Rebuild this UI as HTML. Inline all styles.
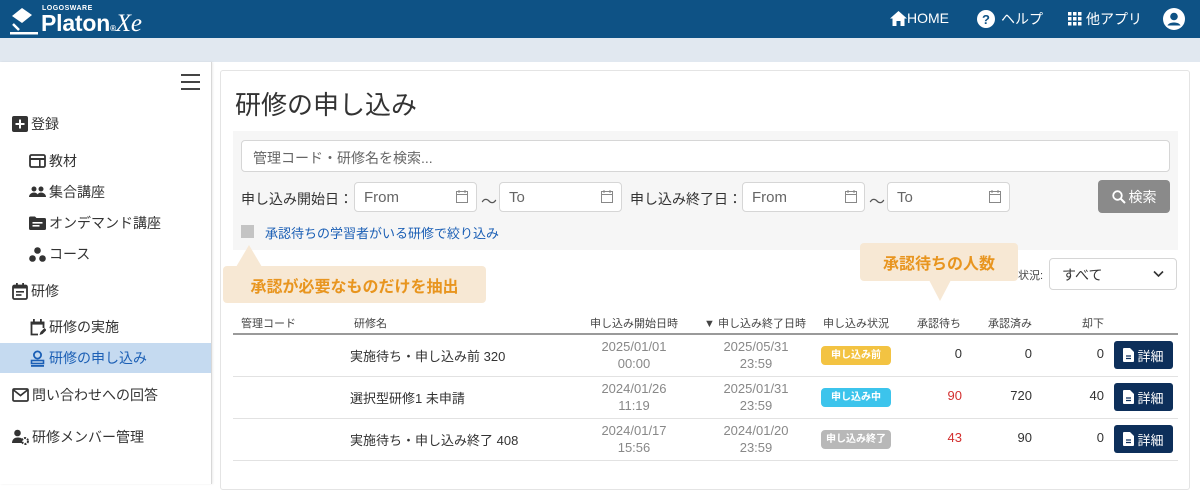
<!DOCTYPE html>
<html><head><meta charset="utf-8"><style>
*{box-sizing:border-box;margin:0;padding:0}
body{width:1200px;height:484px;overflow:hidden;background:#fff;font-family:"Liberation Sans","Noto Sans CJK JP",sans-serif;color:#333;position:relative}
.a{position:absolute}
.hdr{left:0;top:0;width:1200px;height:38px;background:#0e5285}
.band{left:0;top:38px;width:1200px;height:24px;background:#e1e8f0}
.side{left:0;top:62px;width:212px;height:422px;border-right:1px solid #d8d8d8;box-shadow:1px 0 2px rgba(0,0,0,.08);background:#fff}
.nav{font-size:14px;color:#333;white-space:nowrap;display:flex;align-items:center;gap:3px}
.nav svg{flex:none}
.card{left:220px;top:70px;width:970px;height:420px;border:1px solid #e4e4e4;border-radius:3px;background:#fff}
.inp{background:#fff;border:1px solid #d6d6d6;border-radius:4px}
.lbl{font-size:14px;color:#333}
.ph{font-size:14px;color:#666}
.th{font-size:11px;color:#444;top:315px;white-space:nowrap}
.td{font-size:13px;color:#333;white-space:nowrap}
.dt{font-size:13px;color:#888;text-align:center;line-height:17px;width:100px}
.badge{width:70px;height:19px;border-radius:4px;color:#fff;font-size:10px;font-weight:bold;text-align:center;line-height:19px}
.btn{width:59px;height:28px;background:#0d2f5a;border-radius:3px;color:#fff;font-size:13px;display:flex;align-items:center;justify-content:center;gap:3px}
.num{font-size:13px;text-align:right;width:50px}
.line{left:233px;width:945px;height:1px;background:#e2e2e2}
.call{background:#f7e8d4;color:#e8951f;font-weight:bold;font-size:16px;border-radius:4px;display:flex;align-items:center;justify-content:center}
</style></head><body>
<div class="a hdr"></div>
<!-- logo -->
<svg class="a" style="left:8px;top:5px" width="30" height="30" viewBox="0 0 30 30"><path d="M4 11 L14 3 L24 10 L14 18 Z" fill="#fff"/><path d="M5 19 L11 25" stroke="#fff" stroke-width="2.5"/><rect x="2" y="27" width="32" height="2.5" fill="#fff"/></svg>
<div class="a" style="left:42px;top:5px;font-size:7px;color:#fff;font-weight:bold;letter-spacing:.5px">LOGOSWARE</div>
<div class="a" style="left:41px;top:10px;font-size:23px;color:#fff;font-weight:bold;letter-spacing:-.2px;line-height:26px">Platon<span style="font-size:8px">®</span><span style="font-family:'Liberation Serif',serif;font-style:italic;font-weight:normal;font-size:25px">Xe</span></div>
<!-- top nav -->
<svg class="a" style="left:890px;top:11px" width="17" height="15" viewBox="0 0 17 15"><path d="M8.5 0 L17 7.5 H14.5 V15 H10.5 V10 H6.5 V15 H2.5 V7.5 H0 Z" fill="#fff"/></svg>
<div class="a" style="left:907px;top:10px;font-size:14px;color:#fff">HOME</div>
<svg class="a" style="left:977px;top:10px" width="18" height="18" viewBox="0 0 18 18"><circle cx="9" cy="9" r="9" fill="#fff"/><text x="9" y="14" font-size="13" font-weight="bold" text-anchor="middle" fill="#0e5285" font-family="Liberation Sans">?</text></svg>
<div class="a" style="left:1001px;top:9px;font-size:14px;color:#fff">ヘルプ</div>
<svg class="a" style="left:1068px;top:12px" width="14" height="14" viewBox="0 0 14 14" fill="#fff"><rect x="0" y="0" width="3.5" height="3.5"/><rect x="5" y="0" width="3.5" height="3.5"/><rect x="10" y="0" width="3.5" height="3.5"/><rect x="0" y="5" width="3.5" height="3.5"/><rect x="5" y="5" width="3.5" height="3.5"/><rect x="10" y="5" width="3.5" height="3.5"/><rect x="0" y="10" width="3.5" height="3.5"/><rect x="5" y="10" width="3.5" height="3.5"/><rect x="10" y="10" width="3.5" height="3.5"/></svg>
<div class="a" style="left:1086px;top:9px;font-size:14px;color:#fff">他アプリ</div>
<svg class="a" style="left:1163px;top:8px" width="22" height="22" viewBox="0 0 22 22"><circle cx="11" cy="11" r="11" fill="#fff"/><circle cx="11" cy="8.5" r="3.8" fill="#0e5285"/><path d="M4.5 17.5 C6 13.5 16 13.5 17.5 17.5 Z" fill="#0e5285"/></svg>
<div class="a band"></div>
<div class="a side"></div>
<!-- hamburger -->
<div class="a" style="left:181px;top:74px;width:19px;height:2px;background:#444"></div>
<div class="a" style="left:181px;top:81px;width:19px;height:2px;background:#444"></div>
<div class="a" style="left:181px;top:88px;width:19px;height:2px;background:#444"></div>
<!-- sidebar items -->
<div class="a nav" style="left:12px;top:114px"><svg width="16" height="16" viewBox="0 0 16 16"><rect width="16" height="16" rx="2" fill="#333"/><path d="M8 3.5v9M3.5 8h9" stroke="#fff" stroke-width="2"/></svg>登録</div>
<div class="a nav" style="left:29px;top:151px"><svg width="17" height="14" viewBox="0 0 17 14"><rect x="1" y="1" width="15" height="12" rx="1.5" fill="none" stroke="#333" stroke-width="1.8"/><rect x="1" y="4" width="15" height="2" fill="#333"/><rect x="10" y="6" width="1.6" height="7" fill="#333"/></svg>教材</div>
<div class="a nav" style="left:29px;top:182px"><svg width="17" height="14" viewBox="0 0 17 14" fill="#333"><circle cx="5" cy="4" r="2.5"/><circle cx="12" cy="4" r="2.5"/><path d="M0 12c0-3 3-4.5 5-4.5s4.5 1.5 4.5 4.5z"/><path d="M8 12c0-3 2-4.5 4-4.5s5 1.5 5 4.5z"/></svg>集合講座</div>
<div class="a nav" style="left:29px;top:213px"><svg width="17" height="14" viewBox="0 0 17 14"><path d="M0 2a1.5 1.5 0 0 1 1.5-1.5H6l1.5 1.5H15.5A1.5 1.5 0 0 1 17 3.5V12.5A1.5 1.5 0 0 1 15.5 14H1.5A1.5 1.5 0 0 1 0 12.5z" fill="#333"/><rect x="3.5" y="6" width="10" height="1.6" fill="#fff"/><rect x="3.5" y="9" width="7" height="1.6" fill="#fff"/></svg>オンデマンド講座</div>
<div class="a nav" style="left:29px;top:244px"><svg width="17" height="15" viewBox="0 0 17 15" fill="#333"><circle cx="8.5" cy="3.5" r="3.3"/><circle cx="3.5" cy="11.5" r="3.3"/><circle cx="13.5" cy="11.5" r="3.3"/></svg>コース</div>
<div class="a nav" style="left:12px;top:281px"><svg width="16" height="17" viewBox="0 0 16 17"><rect x="1" y="2.5" width="14" height="13.5" rx="1.5" fill="none" stroke="#333" stroke-width="1.8"/><rect x="1" y="2.5" width="14" height="3" fill="#333"/><rect x="4" y="0" width="1.8" height="4" fill="#333"/><rect x="10.2" y="0" width="1.8" height="4" fill="#333"/><rect x="4" y="8" width="8" height="1.6" fill="#333"/><rect x="4" y="11.2" width="5.5" height="1.6" fill="#333"/></svg>研修</div>
<div class="a nav" style="left:29px;top:317px"><svg width="17" height="17" viewBox="0 0 17 17"><path d="M9 15.5H2.5V3.5h12V9" fill="none" stroke="#333" stroke-width="1.8"/><rect x="1.6" y="2.6" width="13.8" height="3" fill="#333"/><rect x="4" y="0" width="1.8" height="4" fill="#333"/><rect x="11" y="0" width="1.8" height="4" fill="#333"/><path d="M10.5 16l1-3 4-4 2 2-4 4z" fill="#333"/></svg>研修の実施</div>
<div class="a" style="left:0;top:343px;width:211px;height:30px;background:#c5daf0"></div>
<div class="a nav" style="left:29px;top:348px;color:#1b5fb5"><svg width="17" height="17" viewBox="0 0 17 17"><circle cx="8.5" cy="5" r="3.6" fill="none" stroke="#1b5fb5" stroke-width="1.8"/><rect x="2.5" y="10.5" width="12" height="3" fill="none" stroke="#1b5fb5" stroke-width="1.6"/><rect x="2" y="15" width="13" height="1.8" fill="#1b5fb5"/></svg>研修の申し込み</div>
<div class="a nav" style="left:12px;top:385px"><svg width="17" height="14" viewBox="0 0 17 14"><rect x="1" y="1" width="15" height="12" rx="1.2" fill="none" stroke="#333" stroke-width="1.7"/><path d="M1.5 2l7 5.5 7-5.5" fill="none" stroke="#333" stroke-width="1.7"/></svg>問い合わせへの回答</div>
<div class="a nav" style="left:12px;top:427px"><svg width="17" height="16" viewBox="0 0 17 16" fill="#333"><circle cx="5.5" cy="4" r="3.3"/><path d="M0 14c0-4 3-5.5 5.5-5.5S10 9 10 10v4z"/><circle cx="13" cy="12" r="3" fill="none" stroke="#333" stroke-width="2" stroke-dasharray="2 1.2"/></svg>研修メンバー管理</div>
<!-- main card -->
<div class="a card"></div>
<div class="a" style="left:235px;top:85px;font-size:26px;color:#333">研修の申し込み</div>
<div class="a" style="left:233px;top:131px;width:945px;height:119px;background:#f6f6f6"></div>
<div class="a inp" style="left:241px;top:140px;width:929px;height:32px"></div>
<div class="a ph" style="left:253px;top:148px">管理コード・研修名を検索...</div>
<div class="a lbl" style="left:241px;top:189px">申し込み開始日：</div>
<div class="a lbl" style="left:630px;top:189px">申し込み終了日：</div>
<div class="a lbl" style="left:481px;top:188px;font-size:16px;color:#555">～</div>
<div class="a lbl" style="left:869px;top:188px;font-size:16px;color:#555">～</div>
<div class="a inp" style="left:354px;top:182px;width:123px;height:30px"></div>
<div class="a inp" style="left:499px;top:182px;width:123px;height:30px"></div>
<div class="a inp" style="left:742px;top:182px;width:123px;height:30px"></div>
<div class="a inp" style="left:887px;top:182px;width:123px;height:30px"></div>
<div class="a ph" style="left:364px;top:189px;font-size:15px">From</div>
<div class="a ph" style="left:509px;top:189px;font-size:15px">To</div>
<div class="a ph" style="left:752px;top:189px;font-size:15px">From</div>
<div class="a ph" style="left:897px;top:189px;font-size:15px">To</div>
<svg class="a" style="left:456px;top:190px" width="12" height="13" viewBox="0 0 12 13"><rect x=".5" y="1.5" width="11" height="11" fill="none" stroke="#888"/><path d="M.5 4.5h11M3 0v3M9 0v3" stroke="#888"/></svg>
<svg class="a" style="left:601px;top:190px" width="12" height="13" viewBox="0 0 12 13"><rect x=".5" y="1.5" width="11" height="11" fill="none" stroke="#888"/><path d="M.5 4.5h11M3 0v3M9 0v3" stroke="#888"/></svg>
<svg class="a" style="left:845px;top:190px" width="12" height="13" viewBox="0 0 12 13"><rect x=".5" y="1.5" width="11" height="11" fill="none" stroke="#888"/><path d="M.5 4.5h11M3 0v3M9 0v3" stroke="#888"/></svg>
<svg class="a" style="left:989px;top:190px" width="12" height="13" viewBox="0 0 12 13"><rect x=".5" y="1.5" width="11" height="11" fill="none" stroke="#888"/><path d="M.5 4.5h11M3 0v3M9 0v3" stroke="#888"/></svg>
<div class="a" style="left:1098px;top:180px;width:72px;height:33px;background:#8a8a8a;border-radius:4px;color:#fff;font-size:14px;display:flex;align-items:center;justify-content:center;gap:3px"><svg width="14" height="14" viewBox="0 0 14 14"><circle cx="5.5" cy="5.5" r="4.3" fill="none" stroke="#fff" stroke-width="1.8"/><path d="M8.5 8.5l4.5 4.5" stroke="#fff" stroke-width="2"/></svg>検索</div>
<div class="a" style="left:241px;top:225px;width:13px;height:13px;background:#c4c4c4"></div>
<div class="a" style="left:265px;top:223px;font-size:13px;color:#1b5fb5">承認待ちの学習者がいる研修で絞り込み</div>
<!-- callouts -->
<svg class="a" style="left:236px;top:245px" width="26" height="22" viewBox="0 0 26 22"><path d="M13 0L26 22H0z" fill="#f7e8d4"/></svg>
<div class="a call" style="left:223px;top:266px;width:263px;height:37px">承認が必要なものだけを抽出</div>
<div class="a call" style="left:860px;top:243px;width:158px;height:38px">承認待ちの人数</div>
<svg class="a" style="left:929px;top:280px" width="22" height="22" viewBox="0 0 22 22"><path d="M0 0H22L11 21z" fill="#f7e8d4"/></svg>
<div class="a" style="left:1018px;top:267px;font-size:11px;color:#444">状況:</div>
<div class="a inp" style="left:1049px;top:258px;width:128px;height:32px"></div>
<div class="a" style="left:1062px;top:265px;font-size:14px;color:#333">すべて</div>
<svg class="a" style="left:1153px;top:270px" width="11" height="8" viewBox="0 0 11 8"><path d="M1 1.5l4.5 4.5 4.5-4.5" fill="none" stroke="#333" stroke-width="1.6"/></svg>
<!-- table head -->
<div class="a th" style="left:241px">管理コード</div>
<div class="a th" style="left:354px">研修名</div>
<div class="a th" style="left:590px">申し込み開始日時</div>
<div class="a th" style="left:704px">▼ 申し込み終了日時</div>
<div class="a th" style="left:823px">申し込み状況</div>
<div class="a th" style="left:917px">承認待ち</div>
<div class="a th" style="left:988px">承認済み</div>
<div class="a th" style="left:1082px">却下</div>
<div class="a" style="left:233px;top:333px;width:945px;height:2px;background:#9a9a9a"></div>
<!-- rows -->
<div class="a td" style="left:350px;top:346px">実施待ち・申し込み前 320</div>
<div class="a dt" style="left:584px;top:338px">2025/01/01<br>00:00</div>
<div class="a dt" style="left:706px;top:338px">2025/05/31<br>23:59</div>
<div class="a badge" style="left:821px;top:346px;background:#f3c342">申し込み前</div>
<div class="a num" style="left:912px;top:346px">0</div>
<div class="a num" style="left:982px;top:346px">0</div>
<div class="a num" style="left:1054px;top:346px">0</div>
<div class="a btn" style="left:1114px;top:341px"><svg width="11" height="14" viewBox="0 0 11 14"><path d="M0 1a1 1 0 0 1 1-1h6l4 4v9a1 1 0 0 1-1 1H1a1 1 0 0 1-1-1z" fill="#fff"/><path d="M3 8h5M3 10.5h5" stroke="#0d2f5a" stroke-width="1.3"/></svg>詳細</div>
<div class="a line" style="top:376px"></div>
<div class="a td" style="left:350px;top:388px">選択型研修1 未申請</div>
<div class="a dt" style="left:584px;top:380px">2024/01/26<br>11:19</div>
<div class="a dt" style="left:706px;top:380px">2025/01/31<br>23:59</div>
<div class="a badge" style="left:821px;top:388px;background:#3cc4ec">申し込み中</div>
<div class="a num" style="left:912px;top:388px;color:#d32f2f">90</div>
<div class="a num" style="left:982px;top:388px">720</div>
<div class="a num" style="left:1054px;top:388px">40</div>
<div class="a btn" style="left:1114px;top:383px"><svg width="11" height="14" viewBox="0 0 11 14"><path d="M0 1a1 1 0 0 1 1-1h6l4 4v9a1 1 0 0 1-1 1H1a1 1 0 0 1-1-1z" fill="#fff"/><path d="M3 8h5M3 10.5h5" stroke="#0d2f5a" stroke-width="1.3"/></svg>詳細</div>
<div class="a line" style="top:418px"></div>
<div class="a td" style="left:350px;top:430px">実施待ち・申し込み終了 408</div>
<div class="a dt" style="left:584px;top:422px">2024/01/17<br>15:56</div>
<div class="a dt" style="left:706px;top:422px">2024/01/20<br>23:59</div>
<div class="a badge" style="left:821px;top:430px;background:#b8b8b8">申し込み終了</div>
<div class="a num" style="left:912px;top:430px;color:#d32f2f">43</div>
<div class="a num" style="left:982px;top:430px">90</div>
<div class="a num" style="left:1054px;top:430px">0</div>
<div class="a btn" style="left:1114px;top:425px"><svg width="11" height="14" viewBox="0 0 11 14"><path d="M0 1a1 1 0 0 1 1-1h6l4 4v9a1 1 0 0 1-1 1H1a1 1 0 0 1-1-1z" fill="#fff"/><path d="M3 8h5M3 10.5h5" stroke="#0d2f5a" stroke-width="1.3"/></svg>詳細</div>
<div class="a line" style="top:460px"></div>
</body></html>
